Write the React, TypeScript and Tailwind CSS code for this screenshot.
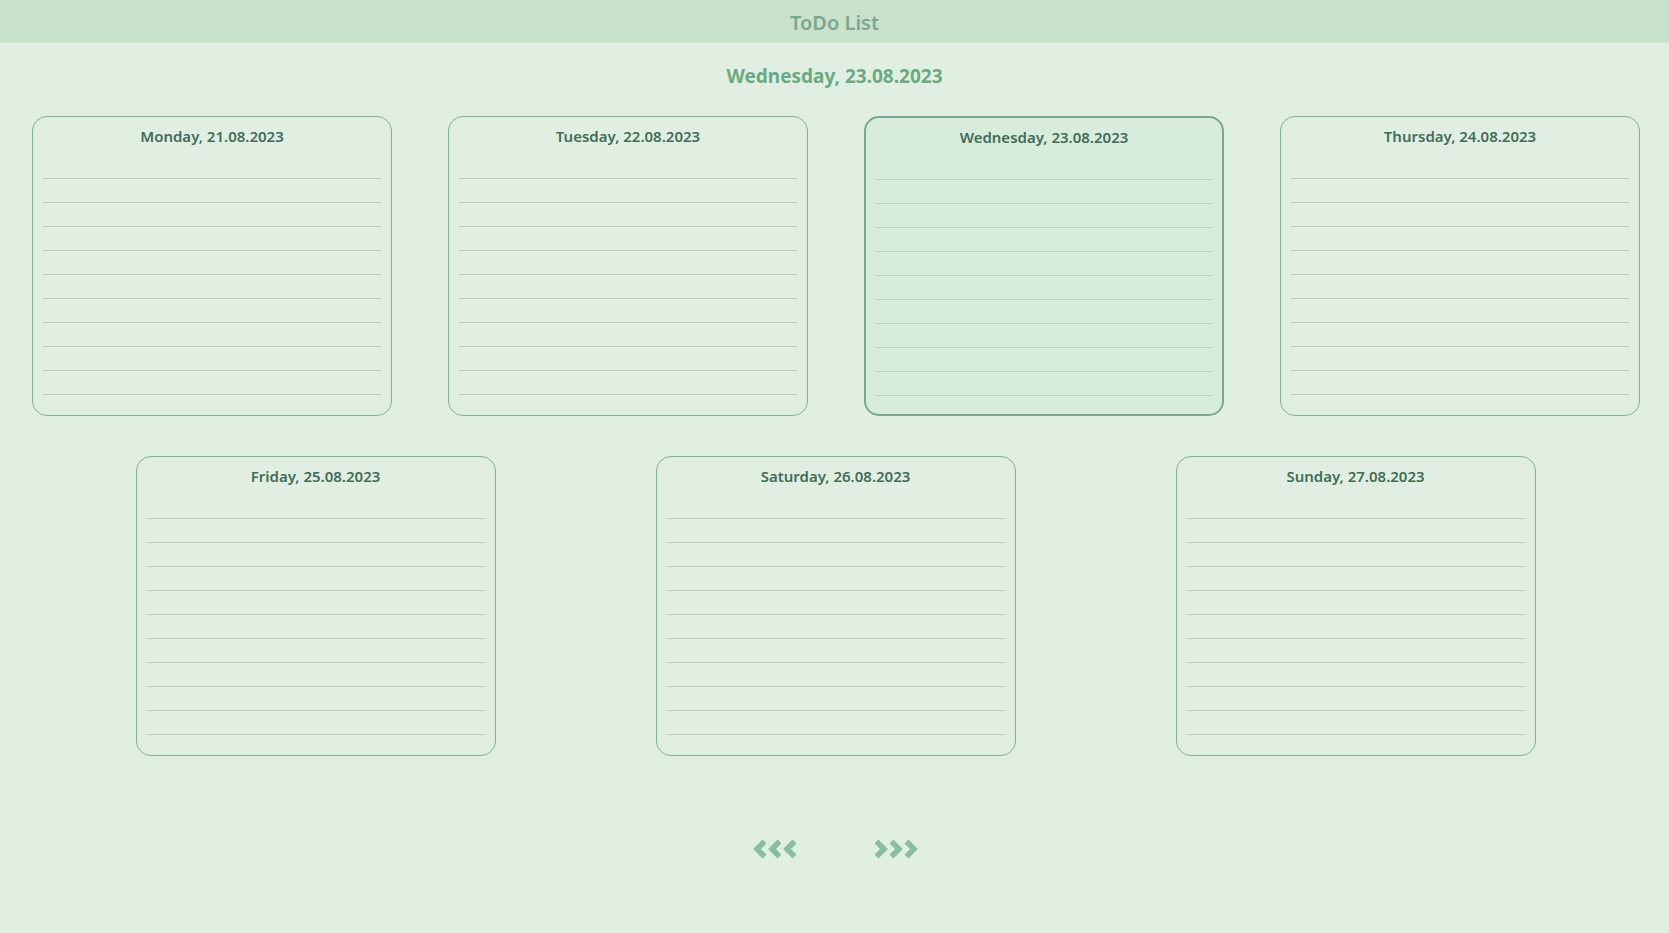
import React from "react";

const DAYS = [
  { label: "Monday, 21.08.2023" },
  { label: "Tuesday, 22.08.2023" },
  { label: "Wednesday, 23.08.2023", today: true },
  { label: "Thursday, 24.08.2023" },
  { label: "Friday, 25.08.2023" },
  { label: "Saturday, 26.08.2023" },
  { label: "Sunday, 27.08.2023" },
];

function DayCard({ label, today }: { label: string; today?: boolean }) {
  return (
    <div
      className={
        "w-[360px] h-[300px] rounded-[15px] px-[10px] pt-[8px] flex flex-col " +
        (today ? "border-2 border-[#7aa88e] bg-[#d8ecdc]" : "border border-[#80b096] bg-[#e0efe2]")
      }
    >
      <h3 className="h-[22px] leading-[22px] text-center text-[15px] font-semibold text-[#3f6e57]">{label}</h3>
      <ul className="mt-[8px]">
        {Array.from({ length: 10 }).map((_, i) => (
          <li key={i} className="h-[24px] border-b border-[#cacac6]" />
        ))}
      </ul>
    </div>
  );
}

function Chevrons({ dir }: { dir: "left" | "right" }) {
  return (
    <svg width="45" height="22" viewBox="0 0 45 22" className={dir === "right" ? "scale-x-[-1]" : ""}>
      {[0, 15, 30].map((x) => (
        <polyline
          key={x}
          points={`${x + 12.5},3.5 ${x + 5},11 ${x + 12.5},18.5`}
          fill="none"
          stroke="#88bd9f"
          strokeWidth="5.5"
          strokeLinejoin="miter"
        />
      ))}
    </svg>
  );
}

export default function App() {
  return (
    <div className="min-h-screen bg-[#e0efe2] font-['Noto_Sans',sans-serif]">
      {/* Header */}
      <header className="h-[43px] pt-[2px] bg-[#c8e2cc] flex items-center justify-center">
        <h1 className="text-[20px] font-semibold text-[#7aa88c]">ToDo List</h1>
      </header>

      <h2 className="mt-[20px] h-[26px] leading-[26px] text-center text-[19px] font-bold text-[#6aaa82]">
        Wednesday, 23.08.2023
      </h2>

      {/* Week */}
      <div className="mt-[27px] flex justify-center gap-[56px] pl-[3px]">
        {DAYS.slice(0, 4).map((d) => (
          <DayCard key={d.label} label={d.label} today={d.today} />
        ))}
      </div>
      <div className="mt-[40px] flex justify-center gap-[160px] pl-[2px]">
        {DAYS.slice(4).map((d) => (
          <DayCard key={d.label} label={d.label} />
        ))}
      </div>

      {/* Pager */}
      <div className="mt-[82px] flex justify-center gap-[77px] pl-[1px]">
        <button className="cursor-pointer">
          <Chevrons dir="left" />
        </button>
        <button className="cursor-pointer">
          <Chevrons dir="right" />
        </button>
      </div>
    </div>
  );
}
